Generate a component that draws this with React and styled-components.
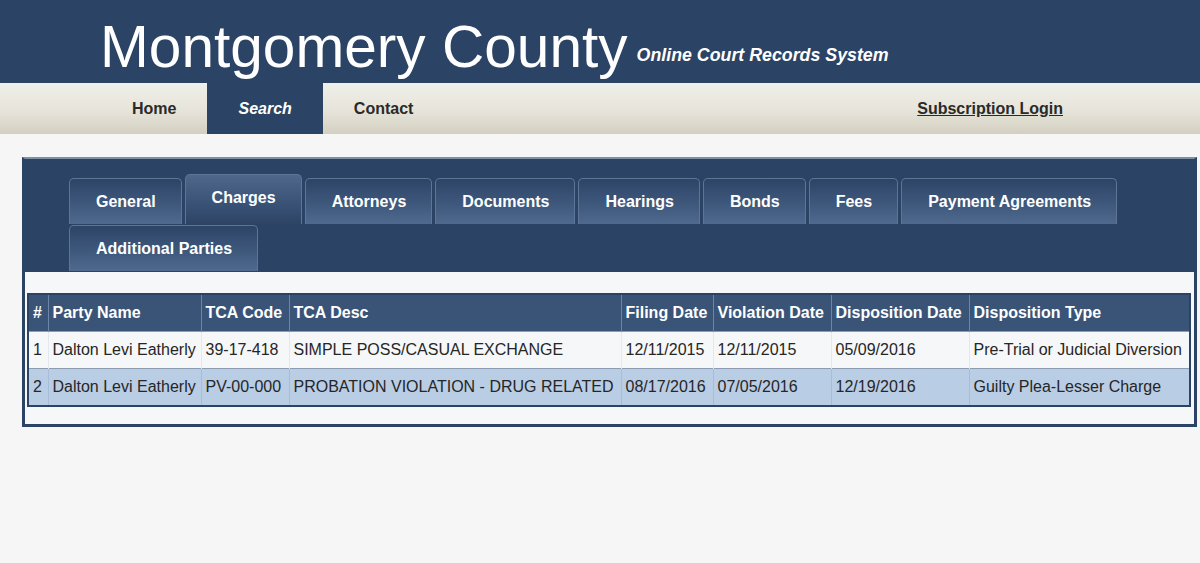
import React from 'react'
import styled, { createGlobalStyle } from 'styled-components'

const GlobalStyle = createGlobalStyle`
  html, body {
    margin: 0;
    padding: 0;
    background: #f6f6f6;
    font-family: "Liberation Sans", Arial, sans-serif;
  }
`

const Page = styled.div`
  width: 1200px;
  height: 563px;
  overflow: hidden;
  background: #f6f6f6;
`

const Banner = styled.header`
  height: 83px;
  background: #2b4364;
  display: flex;
  align-items: flex-end;
  padding-left: 100px;
  box-sizing: border-box;
`

const SiteName = styled.h1`
  margin: 0 0 6px 0;
  font-weight: normal;
  font-size: 58.6px;
  line-height: 1;
  color: #fff;
`

const Tagline = styled.span`
  margin: 0 0 17px 9px;
  font-size: 17.8px;
  font-weight: bold;
  font-style: italic;
  color: #fff;
`

const NavBar = styled.nav`
  height: 51px;
  display: flex;
  align-items: stretch;
  padding-left: 101px;
  background: linear-gradient(to bottom, #f0efe9 0%, #e6e4da 55%, #d3d0c1 100%);
`

const NavItem = styled.a`
  display: flex;
  align-items: center;
  padding: 0 31px;
  font-size: 16px;
  font-weight: bold;
  color: ${p => (p.$active ? '#fff' : '#2a2a2a')};
  background: ${p => (p.$active ? '#2b4364' : 'transparent')};
  font-style: ${p => (p.$active ? 'italic' : 'normal')};
  text-decoration: ${p => (p.$underline ? 'underline' : 'none')};
  margin-left: ${p => (p.$right ? 'auto' : '0')};
  margin-right: ${p => (p.$right ? '106px' : '0')};
`

const Panel = styled.section`
  margin: 23px 0 0 22px;
  width: 1175px;
  box-sizing: border-box;
  border: 3px solid #2b4364;
  border-top-color: #7f8fa4;
  border-top-width: 2px;
`

const TabStrip = styled.div`
  background: #2b4364;
  display: flex;
  flex-wrap: wrap;
  align-items: flex-end;
  row-gap: 1px;
  padding: 15px 0 1px 44px;
`

const Tab = styled.div`
  box-sizing: border-box;
  height: ${p => (p.$active ? '50px' : '46px')};
  margin-right: 3px;
  padding: 0 25px 0 26px;
  display: flex;
  align-items: center;
  justify-content: center;
  font-size: 16px;
  font-weight: bold;
  color: #fff;
  border: 1px solid #5d7698;
  border-bottom: none;
  border-radius: 5px 5px 0 0;
  background: ${p =>
    p.$active
      ? 'linear-gradient(to bottom, #4e678b 0%, #3c5579 50%, #2d4466 100%)'
      : 'linear-gradient(to bottom, #2d4466 0%, #3e587c 55%, #4f6a8e 100%)'};
  padding-bottom: ${p => (p.$active ? '4px' : '0')};
`

const Content = styled.div`
  background: #f5f7f8;
  padding: 21px 3px 17px 2px;
`

const Grid = styled.table`
  width: 100%;
  table-layout: fixed;
  border-collapse: collapse;
  border: 2px solid #2b4364;
  font-size: 16px;
`

const HeadCell = styled.th`
  height: 36px;
  padding: 0 4px;
  text-align: left;
  font-weight: bold;
  color: #fff;
  background: #3a5477;
  border-left: 1px solid #6d86a8;
  white-space: nowrap;
  &:first-child {
    border-left: none;
  }
`

const Row = styled.tr`
  background: ${p => (p.$alt ? '#b9cde5' : '#f5f7f8')};
  border-top: 1px solid #8d9cb0;
`

const Cell = styled.td`
  height: 36px;
  padding: 0 4px;
  color: #262626;
  white-space: nowrap;
  border-left: 1px solid ${p => (p.$alt ? '#a7bcd6' : '#e4e8ec')};
  &:first-child {
    border-left: none;
  }
`

const tabs = [
  'General',
  'Charges',
  'Attorneys',
  'Documents',
  'Hearings',
  'Bonds',
  'Fees',
  'Payment Agreements',
  'Additional Parties',
]

const columns = [
  { label: '#', width: 20 },
  { label: 'Party Name', width: 153 },
  { label: 'TCA Code', width: 88 },
  { label: 'TCA Desc', width: 332 },
  { label: 'Filing Date', width: 92 },
  { label: 'Violation Date', width: 118 },
  { label: 'Disposition Date', width: 138 },
  { label: 'Disposition Type', width: 221 },
]

const charges = [
  ['1', 'Dalton Levi Eatherly', '39-17-418', 'SIMPLE POSS/CASUAL EXCHANGE', '12/11/2015', '12/11/2015', '05/09/2016', 'Pre-Trial or Judicial Diversion'],
  ['2', 'Dalton Levi Eatherly', 'PV-00-000', 'PROBATION VIOLATION - DRUG RELATED', '08/17/2016', '07/05/2016', '12/19/2016', 'Guilty Plea-Lesser Charge'],
]

export default function App() {
  return (
    <Page>
      <GlobalStyle />
      <Banner>
        <SiteName>Montgomery County</SiteName>
        <Tagline>Online Court Records System</Tagline>
      </Banner>
      <NavBar>
        <NavItem>Home</NavItem>
        <NavItem $active>Search</NavItem>
        <NavItem>Contact</NavItem>
        <NavItem $right $underline>Subscription Login</NavItem>
      </NavBar>
      <Panel>
        <TabStrip>
          {tabs.map(t => (
            <Tab key={t} $active={t === 'Charges'}>{t}</Tab>
          ))}
        </TabStrip>
        <Content>
          <Grid>
            <colgroup>
              {columns.map(c => <col key={c.label} style={{ width: c.width }} />)}
            </colgroup>
            <thead>
              <tr>
                {columns.map(c => <HeadCell key={c.label}>{c.label}</HeadCell>)}
              </tr>
            </thead>
            <tbody>
              {charges.map((row, i) => (
                <Row key={row[0]} $alt={i % 2 === 1}>
                  {row.map((val, j) => (
                    <Cell key={j} $alt={i % 2 === 1}>{val}</Cell>
                  ))}
                </Row>
              ))}
            </tbody>
          </Grid>
        </Content>
      </Panel>
    </Page>
  )
}
